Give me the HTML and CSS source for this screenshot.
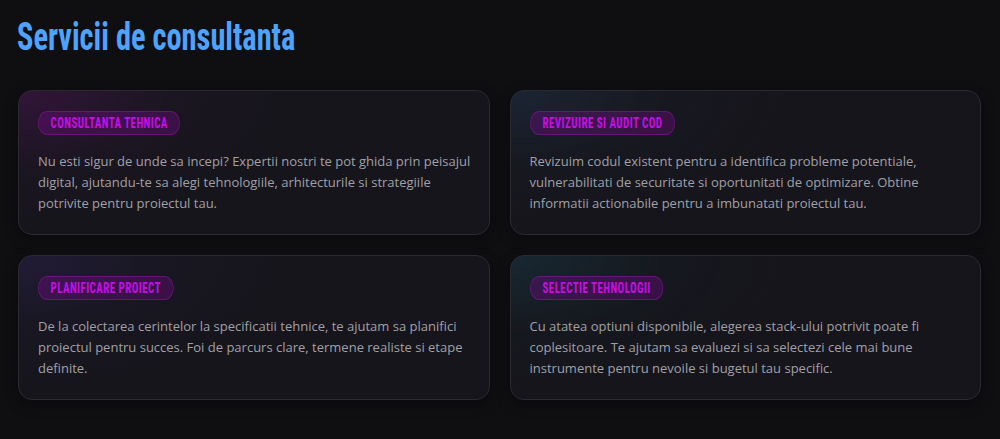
FILE: index.html
```html
<!DOCTYPE html>
<html lang="ro">
<head>
<meta charset="utf-8">
<title>Servicii de consultanta</title>
<link rel="stylesheet" href="styles.css">
</head>
<body>
<main class="page">
  <h1 class="title">Servicii de consultanta</h1>
  <div class="grid">
    <section class="card card-magenta">
      <span class="badge">Consultanta tehnica</span>
      <p class="text">Nu esti sigur de unde sa incepi? Expertii nostri te pot ghida prin peisajul digital, ajutandu-te sa alegi tehnologiile, arhitecturile si strategiile potrivite pentru proiectul tau.</p>
    </section>
    <section class="card card-blue">
      <span class="badge">Revizuire si audit cod</span>
      <p class="text">Revizuim codul existent pentru a identifica probleme potentiale, vulnerabilitati de securitate si oportunitati de optimizare. Obtine informatii actionabile pentru a imbunatati proiectul tau.</p>
    </section>
    <section class="card card-indigo">
      <span class="badge">Planificare proiect</span>
      <p class="text">De la colectarea cerintelor la specificatii tehnice, te ajutam sa planifici proiectul pentru succes. Foi de parcurs clare, termene realiste si etape definite.</p>
    </section>
    <section class="card card-teal">
      <span class="badge">Selectie tehnologii</span>
      <p class="text">Cu atatea optiuni disponibile, alegerea stack-ului potrivit poate fi coplesitoare. Te ajutam sa evaluezi si sa selectezi cele mai bune instrumente pentru nevoile si bugetul tau specific.</p>
    </section>
  </div>
</main>
</body>
</html>
```
FILE: styles.css
```css
* { box-sizing: border-box; }
html, body {
  margin: 0;
  padding: 0;
  background: #0f0f12;
}
body {
  font-family: "Open Sans", "Noto Sans", sans-serif;
  color: #a0a0a8;
}
.page {
  padding: 14px 19px 20px 18px;
}
.title {
  margin: 0 0 30px -1px;
  font-family: "Roboto Condensed", "Roboto", sans-serif;
  font-weight: 700;
  font-size: 38px;
  line-height: 46px;
  color: #4ea3ff;
  transform: scaleX(0.8);
  transform-origin: left center;
  white-space: nowrap;
}
.grid {
  display: grid;
  grid-template-columns: 1fr 1fr;
  gap: 20px;
}
.card {
  display: flex;
  flex-direction: column;
  align-items: flex-start;
  border: 1px solid #2a2a30;
  border-radius: 14px;
  padding: 20px 16px 20px 19px;
  background-color: #16151b;
  box-shadow: 0 4px 14px rgba(0,0,0,0.35);
}
.card-magenta {
  background-image: radial-gradient(ellipse 280px 140px at 0 0, rgba(110, 20, 120, 0.32), rgba(60, 25, 75, 0.12) 55%, rgba(0,0,0,0) 100%);
}
.card-blue {
  background-image: radial-gradient(ellipse 280px 140px at 0 0, rgba(35, 60, 90, 0.4), rgba(30, 40, 60, 0.14) 55%, rgba(0,0,0,0) 100%);
}
.card-indigo {
  background-image: radial-gradient(ellipse 280px 140px at 0 0, rgba(55, 40, 105, 0.35), rgba(40, 30, 70, 0.13) 55%, rgba(0,0,0,0) 100%);
}
.card-teal {
  background-image: radial-gradient(ellipse 280px 140px at 0 0, rgba(25, 70, 85, 0.38), rgba(20, 45, 55, 0.13) 55%, rgba(0,0,0,0) 100%);
}
.badge {
  display: block;
  height: 24px;
  line-height: 22px;
  padding: 0 15px;
  border: 1px solid rgba(150, 20, 170, 0.5);
  border-radius: 12px;
  background: rgba(110, 10, 130, 0.4);
  color: #c80ee6;
  font-family: "Roboto Condensed", "Roboto", sans-serif;
  font-weight: 700;
  font-size: 14px;
  letter-spacing: 0.6px;
  text-transform: uppercase;
  transform: scaleX(0.78);
  transform-origin: left center;
}
.text {
  margin: 16px 0 0 0;
  font-size: 13px;
  line-height: 21px;
  color: #a0a0a8;
}
```
